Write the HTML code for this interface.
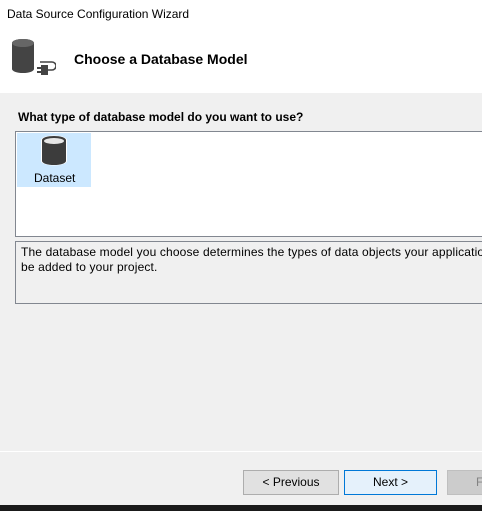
<!DOCTYPE html>
<html><head><style>
html,body{margin:0;width:482px;height:511px;overflow:hidden}
body{background:#f0f0f0;font-family:"Segoe UI","Liberation Sans",sans-serif;font-size:12px;color:#000}
#w{position:relative;width:482px;height:511px;overflow:hidden}
.a{position:absolute}
</style></head><body><div id="w">
<div class="a" style="left:0;top:0;width:482px;height:93px;background:#fff"></div>
<div class="a" style="left:7px;top:7px;font-size:12px">Data Source Configuration Wizard</div>
<svg class="a" style="left:11px;top:38px" width="45" height="38" viewBox="0 0 45 38">
<path d="M1 5 a11 4 0 0 1 22 0 v26 a11 4 0 0 1 -22 0z" fill="#444"/>
<ellipse cx="12" cy="5" rx="11" ry="4" fill="#666"/>
<path d="M30 30 h-4 M30 34 h-4" stroke="#444" stroke-width="2"/>
<rect x="30" y="27" width="7" height="10" fill="#444"/>
<path d="M37 32 h4 a3 3 0 0 0 0 -8 h-12" stroke="#444" stroke-width="1.6" fill="none"/>
</svg>
<div class="a" style="left:74px;top:51px;font-weight:bold;font-size:14px">Choose a Database Model</div>
<div class="a" style="left:18px;top:110px;font-weight:bold">What type of database model do you want to use?</div>
<div class="a" style="left:15px;top:131px;width:480px;height:104px;background:#fff;border:1px solid #828790"></div>
<div class="a" style="left:17px;top:133px;width:74px;height:54px;background:#cce8ff"></div>
<svg class="a" style="left:40px;top:135px" width="28" height="32" viewBox="0 0 28 32">
<path d="M1 5 a13 4.5 0 0 1 26 0 v21 a13 4.5 0 0 1 -26 0z" fill="#fff"/>
<path d="M2 5 a12 4 0 0 1 24 0 v21 a12 4 0 0 1 -24 0z" fill="#3c3c3c"/>
<ellipse cx="14" cy="6" rx="10" ry="3" fill="#e6e6e6"/>
</svg>
<div class="a" style="left:34px;top:171px">Dataset</div>
<div class="a" style="left:15px;top:241px;width:480px;height:61px;border:1px solid #828790"></div>
<div class="a" style="left:21px;top:245px;white-space:nowrap;line-height:15px;letter-spacing:0.15px">The database model you choose determines the types of data objects your application code uses. Other files will<br>be added to your project.</div>
<div class="a" style="left:0;top:451px;width:482px;height:1px;background:#fff"></div>
<div class="a" style="left:243px;top:470px;width:94px;height:23px;background:#e1e1e1;border:1px solid #adadad;text-align:center;line-height:23px">&lt; Previous</div>
<div class="a" style="left:344px;top:470px;width:91px;height:23px;background:#e5f1fb;border:1px solid #0078d7;text-align:center;line-height:23px">Next &gt;</div>
<div class="a" style="left:447px;top:470px;width:60px;height:23px;background:#cccccc;border:1px solid #bfbfbf;color:#838383;line-height:23px;padding-left:28px;box-sizing:content-box">F</div>
<div class="a" style="left:0;top:505px;width:482px;height:6px;background:#1a1a1a"></div>
</div></body></html>
